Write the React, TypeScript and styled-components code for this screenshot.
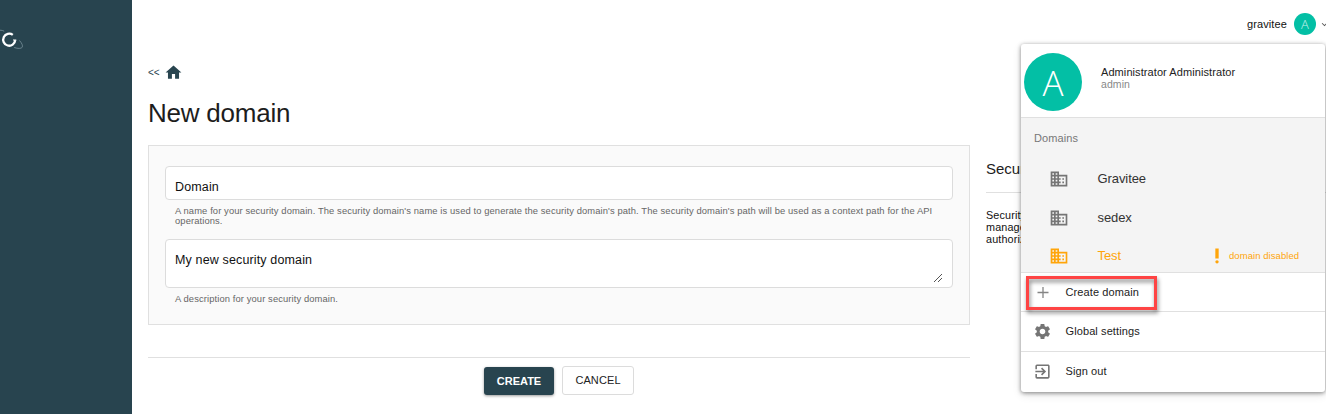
import React from "react";
import styled, { createGlobalStyle } from "styled-components";
import {
  MdDomain,
  MdExitToApp,
  MdHome,
  MdKeyboardArrowDown,
  MdPriorityHigh,
  MdSettings,
} from "react-icons/md";

const GlobalStyle = createGlobalStyle`
  * { box-sizing: border-box; }
  body {
    margin: 0;
    overflow: hidden;
    background: #fff;
    color: #1d1d1d;
    font-family: "Liberation Sans", Arial, sans-serif;
  }
  svg { display: block; flex: none; }
`;

const Page = styled.div`
  position: relative;
  display: flex;
  width: 1326px;
  height: 414px;
  overflow: hidden;
`;

const Sidebar = styled.aside`
  flex: none;
  width: 132px;
  padding-top: 24px;
  background: #28444f;
`;

const Content = styled.div`
  flex: 1;
  min-width: 0;
  display: flex;
  flex-direction: column;
`;

const TopBar = styled.header`
  display: flex;
  align-items: center;
  justify-content: flex-end;
  height: 48px;
  gap: 7px;
  font-size: 11px;
  color: #111;
`;

const UserName = styled.span`
  letter-spacing: 0.12px;
`;

const Avatar = styled.div<{ $size: number; $font: number; $tone: string; $weight: number }>`
  flex: none;
  display: flex;
  align-items: center;
  justify-content: center;
  width: ${(p) => p.$size}px;
  height: ${(p) => p.$size}px;
  border-radius: 50%;
  background: #03bfa5;
  color: ${(p) => p.$tone};
  font-family: "Open Sans", sans-serif;
  font-weight: ${(p) => p.$weight};
  font-size: ${(p) => p.$font}px;
  line-height: 1;
`;

const Caret = styled.span`
  width: 7px;
  overflow: hidden;
  margin-left: -4px;
  color: #555;
`;

const Breadcrumb = styled.nav`
  display: flex;
  align-items: center;
  gap: 4px;
  height: 19px;
  margin: 15px 0 0 16px;
  color: #28444f;
  font-size: 10px;
`;

const Title = styled.h1`
  margin: 16px 0 0 16px;
  font-size: 26px;
  font-weight: 400;
  line-height: 30px;
  letter-spacing: -0.22px;
`;

const Columns = styled.main`
  display: flex;
  gap: 16px;
  margin: 17px 0 0 16px;
`;

const FormColumn = styled.form`
  flex: none;
  width: 822px;
`;

const Panel = styled.section`
  height: 180px;
  padding: 20px 16px;
  border: 1px solid #e0e0e0;
  background: #fafafa;
`;

const Field = styled.div<{ $height: number }>`
  display: flex;
  justify-content: space-between;
  height: ${(p) => p.$height}px;
  padding: 12px 9px 0;
  border: 1px solid #dcdcdc;
  border-radius: 4px;
  background: #fff;
  color: #111;
  font-size: 12.5px;
  line-height: 16px;
  letter-spacing: 0.14px;
`;

const Hint = styled.p<{ $bottom?: number }>`
  margin: 6px 10px ${(p) => p.$bottom ?? 0}px;
  color: #666;
  font-size: 9.4px;
  line-height: 10px;
  letter-spacing: 0.105px;
`;

const Grip = styled.svg`
  align-self: flex-end;
  margin-bottom: 4px;
`;

const Actions = styled.footer`
  display: flex;
  align-items: flex-start;
  justify-content: center;
  gap: 8px;
  margin-top: 32px;
  padding: 8px 0 0;
  border-top: 1px solid #e0e0e0;
`;

const Button = styled.button<{ $primary?: boolean }>`
  height: ${(p) => (p.$primary ? 28 : 29)}px;
  width: ${(p) => (p.$primary ? 70 : 72)}px;
  margin-top: ${(p) => (p.$primary ? 1 : 0)}px;
  padding: ${(p) => (p.$primary ? "0" : "0 0 2px")};
  border: ${(p) => (p.$primary ? "0" : "1px solid #dcdcdc")};
  border-radius: 3px;
  background: ${(p) => (p.$primary ? "#28444f" : "#fff")};
  color: ${(p) => (p.$primary ? "#fff" : "#222")};
  box-shadow: ${(p) => (p.$primary ? "0 1px 3px rgba(0,0,0,.4)" : "none")};
  font-family: inherit;
  font-size: 11px;
  font-weight: ${(p) => (p.$primary ? 700 : 400)};
  letter-spacing: ${(p) => (p.$primary ? 0 : "0.1px")};
`;

const Help = styled.aside`
  flex: 1;
  padding-top: 14px;
`;

const HelpTitle = styled.h2`
  margin: 0 0 16px;
  padding-bottom: 13px;
  border-bottom: 1px solid #e0e0e0;
  font-size: 15px;
  font-weight: 400;
  line-height: 20px;
`;

const HelpText = styled.p`
  margin: 0;
  color: #111;
  font-size: 10.8px;
  line-height: 12px;
  letter-spacing: 0.14px;
  white-space: pre-line;
`;

const Menu = styled.div`
  position: absolute;
  top: 44px;
  left: 1021px;
  width: 304px;
  height: 348px;
  border-radius: 3px;
  background: #fff;
  box-shadow: 0 1px 4px rgba(0, 0, 0, 0.45), 0 3px 10px rgba(0, 0, 0, 0.1);
  overflow: hidden;
`;

const Profile = styled.div`
  display: flex;
  gap: 19px;
  height: 74px;
  padding: 9px 3px 0;
  border-bottom: 1px solid #e0e0e0;
`;

const Identity = styled.div`
  padding-top: 13px;
  font-size: 11px;
  line-height: 12px;
  color: #222;
  letter-spacing: 0.08px;
`;

const Login = styled.div`
  color: #888;
  font-size: 10.5px;
`;

const DomainGroup = styled.div`
  height: 155px;
  padding-top: 13px;
  border-bottom: 1px solid #e0e0e0;
  background: #f4f4f4;
`;

const GroupLabel = styled.div`
  margin: 0 0 15px 13px;
  color: #777;
  font-size: 11px;
  line-height: 14px;
  letter-spacing: 0.1px;
`;

const DomainRow = styled.div<{ $warn?: boolean }>`
  display: flex;
  align-items: center;
  height: 38.5px;
  padding-left: 28px;
  color: ${(p) => (p.$warn ? "#ffa50a" : "#757575")};
`;

const DomainName = styled.span<{ $warn?: boolean }>`
  width: 109px;
  margin-left: 28.5px;
  color: ${(p) => (p.$warn ? "#ffa50a" : "#333")};
  font-size: 13px;
  line-height: 16px;
  letter-spacing: -0.08px;
`;

const Status = styled.span`
  margin: -1px 0 0 2.5px;
  font-size: 9.5px;
  letter-spacing: 0.06px;
`;

const MenuRow = styled.div<{ $height: number; $last?: boolean }>`
  display: flex;
  align-items: center;
  gap: 13.5px;
  height: ${(p) => p.$height}px;
  padding-left: 12px;
  padding-bottom: ${(p) => (p.$last ? 1 : 0)}px;
  border-bottom: ${(p) => (p.$last ? "0" : "1px solid #e0e0e0")};
  color: #757575;
  font-size: 11px;
`;

const MenuText = styled.span<{ $lift?: number }>`
  padding-bottom: ${(p) => p.$lift ?? 0}px;
  color: #222;
  letter-spacing: 0.1px;
`;

const Highlight = styled.div`
  position: absolute;
  top: 276px;
  left: 1026px;
  width: 131px;
  height: 34px;
  border: 3px solid #fe4444;
  filter: drop-shadow(1px 3px 2px rgba(0, 0, 0, 0.5));
`;

function Logo() {
  return (
    <svg width="26" height="32" viewBox="0 0 26 32" fill="none">
      <path
        d="M0 6.2c1.6 0 3 .3 4.2 1M19.5 16.5c2.3 2.6 3.6 5.2 2.7 6.8-.9 1.4-4.3 1.5-8 .2"
        stroke="#78909a"
        strokeWidth=".8"
      />
      <path d="M12.8 10.900A6 6 0 1 0 15.200 16.200" stroke="#fff" strokeWidth="2.300" />
      <path d="M13 16h3.300" stroke="#fff" strokeWidth="1" />
    </svg>
  );
}

function PlusIcon() {
  return (
    <svg width="19" height="19" viewBox="0 0 19 19" stroke="#858585" strokeWidth="1.3">
      <path d="M10 4v11M4.500 9.500h11" />
    </svg>
  );
}

const domains = [
  { name: "Gravitee", disabled: false },
  { name: "sedex", disabled: false },
  { name: "Test", disabled: true },
];

export default function App() {
  return (
    <Page>
      <GlobalStyle />
      <Sidebar>
        <Logo />
      </Sidebar>
      <Content>
        <TopBar>
          <UserName>gravitee</UserName>
          <Avatar $size={22} $font={13} $tone="#c5f0ea" $weight={300}>A</Avatar>
          <Caret>
            <MdKeyboardArrowDown size={11} />
          </Caret>
        </TopBar>
        <Breadcrumb>
          <span>&lt;&lt;</span>
          <MdHome size={19} />
        </Breadcrumb>
        <Title>New domain</Title>
        <Columns>
          <FormColumn>
            <Panel>
              <Field $height={34}>Domain</Field>
              <Hint $bottom={13}>
                A name for your security domain. The security domain's name is used to generate the
                security domain's path. The security domain's path will be used as a context path
                for the API operations.
              </Hint>
              <Field $height={49}>
                My new security domain
                <Grip width="10" height="10" viewBox="0 0 10 10" stroke="#555" strokeWidth="1">
                  <path d="M1 9L9 1M5 9l4-4" />
                </Grip>
              </Field>
              <Hint>A description for your security domain.</Hint>
            </Panel>
            <Actions>
              <Button type="button" $primary>CREATE</Button>
              <Button type="button">CANCEL</Button>
            </Actions>
          </FormColumn>
          <Help>
            <HelpTitle>Security</HelpTitle>
            <HelpText>{"Security\nmanage\nauthorize"}</HelpText>
          </Help>
        </Columns>
      </Content>
      <Menu>
        <Profile>
          <Avatar $size={58} $font={35} $tone="#fff" $weight={300}>A</Avatar>
          <Identity>
            Administrator Administrator
            <Login>admin</Login>
          </Identity>
        </Profile>
        <DomainGroup>
          <GroupLabel>Domains</GroupLabel>
          {domains.map((d) => (
            <DomainRow key={d.name} $warn={d.disabled}>
              <MdDomain size={20} />
              <DomainName $warn={d.disabled}>{d.name}</DomainName>
              {d.disabled && (
                <>
                  <MdPriorityHigh size={20} />
                  <Status>domain disabled</Status>
                </>
              )}
            </DomainRow>
          ))}
        </DomainGroup>
        <MenuRow $height={39}>
          <PlusIcon />
          <MenuText>Create domain</MenuText>
        </MenuRow>
        <MenuRow $height={40}>
          <MdSettings size={19} />
          <MenuText $lift={2}>Global settings</MenuText>
        </MenuRow>
        <MenuRow $height={40} $last>
          <MdExitToApp size={19} />
          <MenuText $lift={1}>Sign out</MenuText>
        </MenuRow>
      </Menu>
      <Highlight />
    </Page>
  );
}
